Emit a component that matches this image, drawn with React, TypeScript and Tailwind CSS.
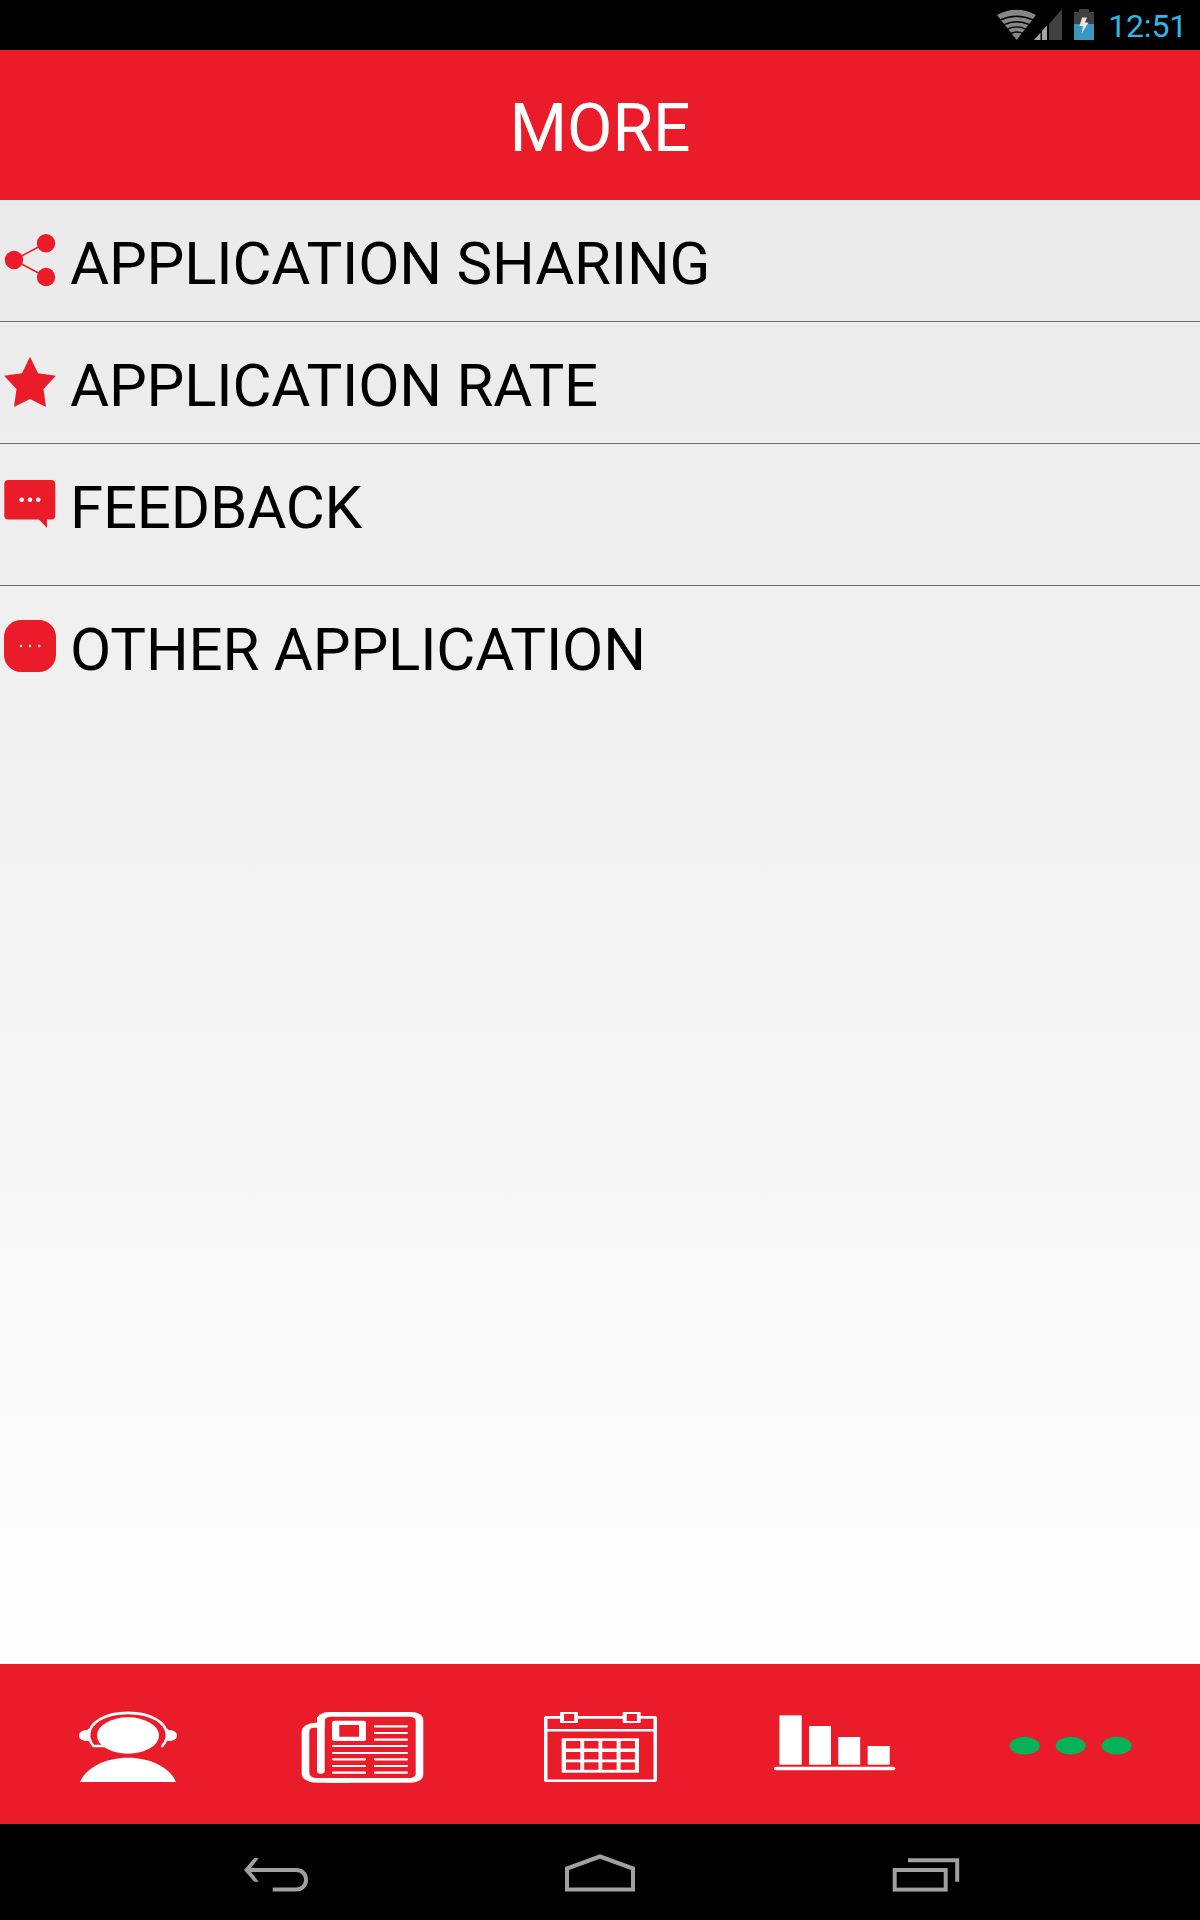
import React from "react";

const ShareIcon = () => (
  <svg viewBox="0 0 52 52" className="size-[52px]" fill="#ea1c29">
    <path d="M42 9L10 26L42 43" fill="none" stroke="#ea1c29" strokeWidth="1.5" />
    <circle cx="10" cy="26" r="9.2" />
    <circle cx="42" cy="9.2" r="9.2" />
    <circle cx="42" cy="43" r="9.2" />
  </svg>
);

const StarIcon = () => (
  <svg viewBox="0 0 52 52" className="size-[52px]" fill="#ea1c29">
    <path d="M26 0.8L34 17.3L52 19.8L39.5 33L42 51L26 43L10 51L12.5 33L0 19.8L18 17.3Z" />
  </svg>
);

const FeedbackIcon = () => (
  <svg viewBox="0 0 52 52" className="size-[52px]" fill="#ea1c29">
    <rect x="0.3" y="2" width="51" height="39.5" rx="4" />
    <path d="M34.5 41H43V50Z" />
    <g fill="#fff">
      <circle cx="17.7" cy="21.7" r="2.3" />
      <circle cx="26" cy="21.7" r="2.3" />
      <circle cx="34.3" cy="21.7" r="2.3" />
    </g>
  </svg>
);

const OtherIcon = () => (
  <svg viewBox="0 0 52 52" className="size-[52px]" fill="#ea1c29">
    <rect width="52" height="52" rx="17" />
    <g fill="#fff">
      <circle cx="17" cy="26" r="1.2" />
      <circle cx="26" cy="26" r="1.2" />
      <circle cx="35.3" cy="26" r="1.2" />
    </g>
  </svg>
);

const SupportIcon = () => (
  <svg viewBox="0 0 130 80" className="w-[130px] h-20" fill="#fff">
    <ellipse cx="65" cy="31.5" rx="31" ry="18.2" />
    <path d="M26 31.5C26 18 43 8.9 65 8.9S104 18 104 31.5" fill="none" stroke="#fff" strokeWidth="2.6" />
    <path d="M26 26Q24.5 35 30.5 42H44M104 26Q105.5 35 99.3 42" fill="none" stroke="#fff" strokeWidth="2.6" strokeLinecap="round" />
    <path d="M27 26Q16 25.5 16 31.5T27 37Q25.5 31 27 26ZM103 26Q114 25.5 114 31.5T103 37Q104.5 31 103 26Z" />
    <path d="M17 78C23 64 42 53.8 65 53.8S107 64 113 78Z" />
  </svg>
);

const NewsIcon = () => (
  <svg viewBox="0 0 130 80" className="w-[130px] h-20" fill="#fff">
    <rect x="2.7" y="18.7" width="60" height="60" rx="14" ry="9" />
    <rect x="18" y="8" width="106.3" height="70.7" rx="12" ry="8" />
    <g fill="#ea1c29">
      <path d="M18 23.7H15Q10.3 23.7 10.3 28V68Q10.3 74 18 74H30V23.7Z" />
      <rect x="25.7" y="12.7" width="91" height="61.3" rx="6" ry="4" />
      <rect x="18" y="24" width="7.7" height="49.5" />
    </g>
    <path d="M18 13H25.7V67Q25.7 69.7 21.8 69.7T18 67Z" />
    <path fillRule="evenodd" d="M36 16.7H64Q67 16.7 67 19V35Q67 37 64 37H36Q33 37 33 35V19Q33 16.7 36 16.7ZM40.3 21V32.7H60V21Z" />
    <path
      d="M76 22.3H108M76 29H108M76 35.7H108M34 42H108M34 49H108M34 55.3H66M76 55.3H108M34 62H66M76 62H108M34 68.7H66M76 68.7H108"
      stroke="#fff"
      strokeWidth="2.2"
      strokeLinecap="round"
    />
  </svg>
);

const CalendarIcon = () => (
  <svg viewBox="0 0 130 80" className="w-[130px] h-20" fill="#fff">
    <path fillRule="evenodd" d="M11 12H120Q122 12 122 14V76Q122 78 120 78H11Q9 78 9 76V14Q9 12 11 12ZM12.5 14.8V75.5H118.5V14.8Z" />
    <rect x="10" y="25" width="110" height="2.5" />
    {[25, 87.7].map((x) => (
      <g key={x}>
        <rect x={x} y="8" width="18" height="11" rx="1" />
        <rect x={x + 4} y="10" width="10.2" height="7" fill="#ea1c29" />
      </g>
    ))}
    <rect x="26.7" y="34.3" width="77.3" height="34.4" />
    <g fill="#ea1c29">
      {[31, 49.2, 67.3, 85.6].map((x) =>
        [37, 48, 58.3].map((y) => (
          <rect key={`${x}-${y}`} x={x} y={y} width="14.3" height="7.5" />
        ))
      )}
    </g>
  </svg>
);

const ChartIcon = () => (
  <svg viewBox="0 0 130 80" className="w-[130px] h-20" fill="#fff">
    <rect x="8.4" y="11.4" width="22.3" height="49.3" />
    <rect x="38" y="22" width="22" height="38.7" />
    <rect x="67.2" y="33" width="22" height="27.7" />
    <rect x="96.7" y="42" width="22" height="18.7" />
    <rect x="3" y="62.7" width="121.3" height="3.6" rx="1.8" />
  </svg>
);

const DotsIcon = () => (
  <svg viewBox="0 0 130 80" className="w-[130px] h-20" fill="#05b257">
    <ellipse cx="17.7" cy="41.7" rx="15" ry="8.9" />
    <ellipse cx="63.7" cy="41.7" rx="15" ry="8.9" />
    <ellipse cx="109.7" cy="41.7" rx="15" ry="8.9" />
  </svg>
);

const StatusBar = () => (
  <div className="h-[50px] bg-black flex items-center justify-end pr-[13px]">
    <svg viewBox="0 0 39 50" className="w-[39px] h-[50px]">
      <path d="M19.7 40L0 15Q19.5 4.5 39 15Z" fill="#868686" />
      <g fill="none" stroke="#000" strokeWidth="1.4">
        <path d="M3 20Q19.7 12.5 36.5 20" />
        <path d="M7 24.7Q19.7 18.7 32.5 24.7" />
        <path d="M10.5 29.2Q19.7 24.5 29 29.2" />
        <path d="M13.5 33.5Q19.7 30.5 26 33.5" />
      </g>
    </svg>
    <svg viewBox="0 0 28 50" className="w-7 h-[50px] -ml-0.5">
      <path d="M15 24V40H28V9Z" fill="#404040" />
      <path d="M0 40L6.5 32.7V40ZM8 31L13 25.5V40H8Z" fill="#a5a5a5" />
    </svg>
    <svg viewBox="0 0 20 50" className="w-5 h-[50px] ml-3">
      <path d="M0 12H5V9H15V12H20V24H0Z" fill="#404040" />
      <rect y="24" width="20" height="16" fill="#3a97bf" />
      <path d="M8 17.5H13L11 22.5H14.5L7.5 34L9 26H5.5Z" fill="#e6e6e6" />
    </svg>
    <span className="ml-3.5 pt-0.5 text-[32px] leading-[48px] tracking-[-0.2px] text-[#33b5e5]">12:51</span>
  </div>
);

const menuItems = [
  { label: "APPLICATION SHARING", icon: <ShareIcon />, className: "h-[122px] border-b" },
  { label: "APPLICATION RATE", icon: <StarIcon />, className: "h-[122px] border-b" },
  { label: "FEEDBACK", icon: <FeedbackIcon />, className: "h-[142px] border-b" },
  { label: "OTHER APPLICATION", icon: <OtherIcon />, className: "h-[122px]" },
];

const App: React.FC = () => {
  return (
    <div className="w-[1200px] h-[1920px] flex flex-col overflow-hidden font-[Roboto,sans-serif]">
      <StatusBar />

      <header className="h-[150px] bg-[#ea1c29] flex items-center justify-center pt-2">
        <h1 className="text-[66px] leading-none text-white">MORE</h1>
      </header>

      <main className="flex-1 bg-linear-to-b from-[#eaeaea] to-[#fefefe]">
        <ul>
          {menuItems.map((item) => (
            <li key={item.label} className={`flex items-start pl-1 border-[#6e6e6e] ${item.className}`}>
              <div className="pt-[34px]">{item.icon}</div>
              <span className="pt-[29px] pl-3.5 text-[60px] leading-[70px] tracking-[-0.2px] text-black whitespace-nowrap">
                {item.label}
              </span>
            </li>
          ))}
        </ul>
      </main>

      <nav className="h-40 bg-[#ea1c29] flex items-center justify-between px-[63px]">
        <SupportIcon />
        <NewsIcon />
        <CalendarIcon />
        <ChartIcon />
        <DotsIcon />
      </nav>

      {/* System navigation */}
      <div className="h-24 bg-black flex items-center justify-center gap-[252px]">
        <svg viewBox="0 0 72 48" className="w-[72px] h-12" fill="none" stroke="#a0a0a0" strokeWidth="4">
          <path d="M8 22H56C62 22 66 26 66 31.8S62 41.6 56 41.6H32.7" />
          <path d="M4 22L14.3 10H18.7L9.5 22L18.7 33.7H14.3Z" fill="#a0a0a0" stroke="none" />
        </svg>
        <svg viewBox="0 0 72 48" className="w-[72px] h-12" fill="none" stroke="#a0a0a0" strokeWidth="4">
          <path d="M3 20.5L36 8.5L69 20.5V41.6H3Z" />
        </svg>
        <svg viewBox="0 0 72 48" className="w-[72px] h-12" fill="none" stroke="#a0a0a0" strokeWidth="4">
          <rect x="6.7" y="22" width="51" height="19.6" />
          <path d="M20 12.2H69.2V33.7" />
        </svg>
      </div>
    </div>
  );
};

export default App;
